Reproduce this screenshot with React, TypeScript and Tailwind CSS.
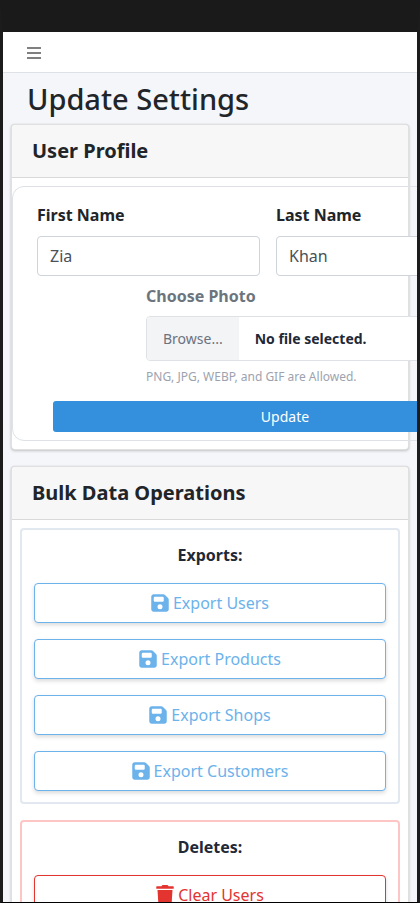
import React from "react";
import { FaTrash } from "react-icons/fa";
import { FaFloppyDisk } from "react-icons/fa6";

function Card({ title, children }: { title: string; children: React.ReactNode }) {
  return (
    <section className="mb-4 rounded border border-black/12 bg-white shadow-[0_0_1px_rgba(0,0,0,0.125),0_1px_3px_rgba(0,0,0,0.2)]">
      <header className="rounded-t border-b border-black/12 bg-[#f7f7f7] px-5 py-3">
        <h2 className="text-[20px] leading-7 font-bold">{title}</h2>
      </header>
      {children}
    </section>
  );
}

function TextField({ id, label, value }: { id: string; label: string; value: string }) {
  return (
    <div className="flex flex-col">
      <label htmlFor={id} className="mb-[9px] leading-6 font-bold">
        {label}
      </label>
      <input
        id={id}
        defaultValue={value}
        className="h-10 w-full rounded border border-[#ced4da] bg-white px-3 text-base text-[#495057]"
      />
    </div>
  );
}

function ProfileForm() {
  return (
    <form className="my-2 w-[546px] rounded-xl border border-[#dee2e6] px-6 pt-4 pb-2">
      <div className="grid grid-cols-[223px_1fr] gap-4">
        <TextField id="first-name" label="First Name" value="Zia" />
        <TextField id="last-name" label="Last Name" value="Khan" />
      </div>
      <div className="mt-2 ml-[109px]">
        <label htmlFor="photo" className="block leading-6 font-bold text-[#6c757d]">
          Choose Photo
        </label>
        <input id="photo" type="file" className="sr-only" />
        <label
          htmlFor="photo"
          className="mt-2 flex h-[45px] items-stretch overflow-hidden rounded border border-[#dee2e6] bg-white text-sm"
        >
          <span className="flex items-center bg-[#f3f4f6] px-4 text-[#6b7280]">Browse...</span>
          <span className="flex items-center px-4 font-bold text-[#1f2937]">No file selected.</span>
        </label>
        <p className="mt-2 text-xs text-[#9ca3af]">PNG, JPG, WEBP, and GIF are Allowed.</p>
      </div>
      <div className="mt-4 px-4">
        <button type="button" className="h-[31px] w-full rounded-[3px] bg-[#3490dc] text-sm text-white">
          Update
        </button>
      </div>
    </form>
  );
}

function ActionGroup({ title, items, danger = false }: { title: string; items: string[]; danger?: boolean }) {
  const Icon = danger ? FaTrash : FaFloppyDisk;
  return (
    <div
      className={`flex flex-col gap-4 rounded border-2 px-3 pt-[13px] pb-[11px] ${danger ? "border-[#fec5c5]" : "border-[#e2e8f0]"}`}
    >
      <h3 className="text-center leading-6 font-bold text-[#1f2937]">{title}</h3>
      {items.map((item) => (
        <button
          key={item}
          type="button"
          className={`flex h-10 items-center justify-center gap-1 rounded border bg-white shadow-[0_2px_4px_rgba(0,0,0,0.15)] ${danger ? "border-[#e3342f] text-[#e3342f]" : "border-[#6cb2eb] text-[#6cb2eb]"}`}
        >
          <Icon className="size-5 -mx-px" />
          {item}
        </button>
      ))}
    </div>
  );
}

export default function App() {
  return (
    <div className="h-screen overflow-hidden border-x-3 border-t-32 border-b border-x-[#1c1c1d] border-t-[#1a1a1b] border-b-black bg-[#f4f6f9] font-['Noto_Sans',sans-serif] text-base text-[#212529]">
      <nav className="flex h-[41px] items-center border-b border-[#dee2e6] bg-white px-6 pt-px">
        <button type="button" aria-label="Toggle menu">
          <svg viewBox="0 0 14 12" className="h-3 w-3.5" fill="#808080" shapeRendering="crispEdges">
            <path d="M0 0h14v2H0zM0 5h14v2H0zM0 10h14v2H0z" />
          </svg>
        </button>
      </nav>
      <main className="px-2 pt-2">
        <h1 className="mb-2 px-4 text-[29px] leading-[35px] font-medium">Update Settings</h1>
        <Card title="User Profile">
          <ProfileForm />
        </Card>
        <Card title="Bulk Data Operations">
          <div className="flex flex-col gap-4 p-2">
            <ActionGroup title="Exports:" items={["Export Users", "Export Products", "Export Shops", "Export Customers"]} />
            <ActionGroup title="Deletes:" items={["Clear Users"]} danger />
          </div>
        </Card>
      </main>
    </div>
  );
}
